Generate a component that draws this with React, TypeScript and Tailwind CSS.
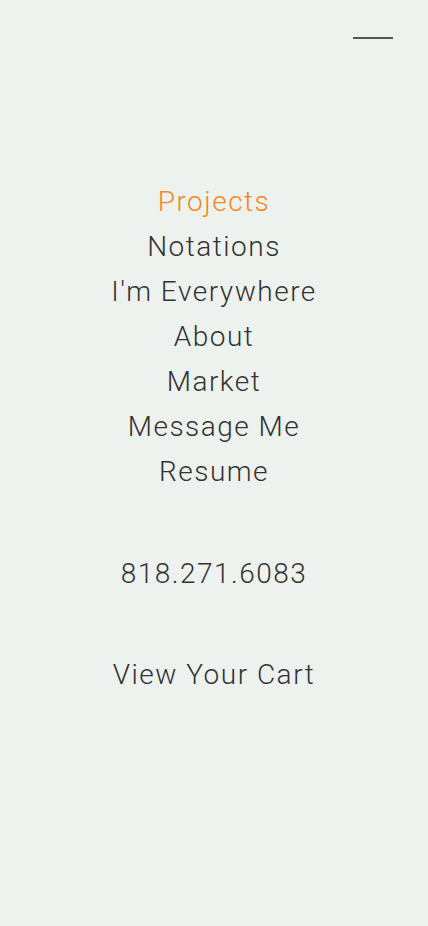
import React from "react";

const links = ["Projects", "Notations", "I'm Everywhere", "About", "Market", "Message Me", "Resume"];

const App: React.FC = () => {
  return (
    <div
      className="w-full min-h-[926px] bg-[#eef2ef] text-[#333333] flex flex-col"
      style={{ fontFamily: "Roboto, 'Liberation Sans', sans-serif" }}
    >
      {/* header with menu toggle */}
      <div className="flex justify-end pt-[37px] pr-[35px]">
        <button className="w-[40px] h-[2px] bg-[#555555]" aria-label="Close menu" />
      </div>

      <nav className="flex flex-col items-center mt-[140px] text-[28px] font-light leading-[45px] tracking-[1.5px]">
        {links.map((l, i) => (
          <a key={l} href="#" className={i === 0 ? "text-[#f7861f]" : ""}>
            {l}
          </a>
        ))}
        <a href="#" className="mt-[57px]">818.271.6083</a>
        <a href="#" className="mt-[56px]">View Your Cart</a>
      </nav>
    </div>
  );
};

export default App;
